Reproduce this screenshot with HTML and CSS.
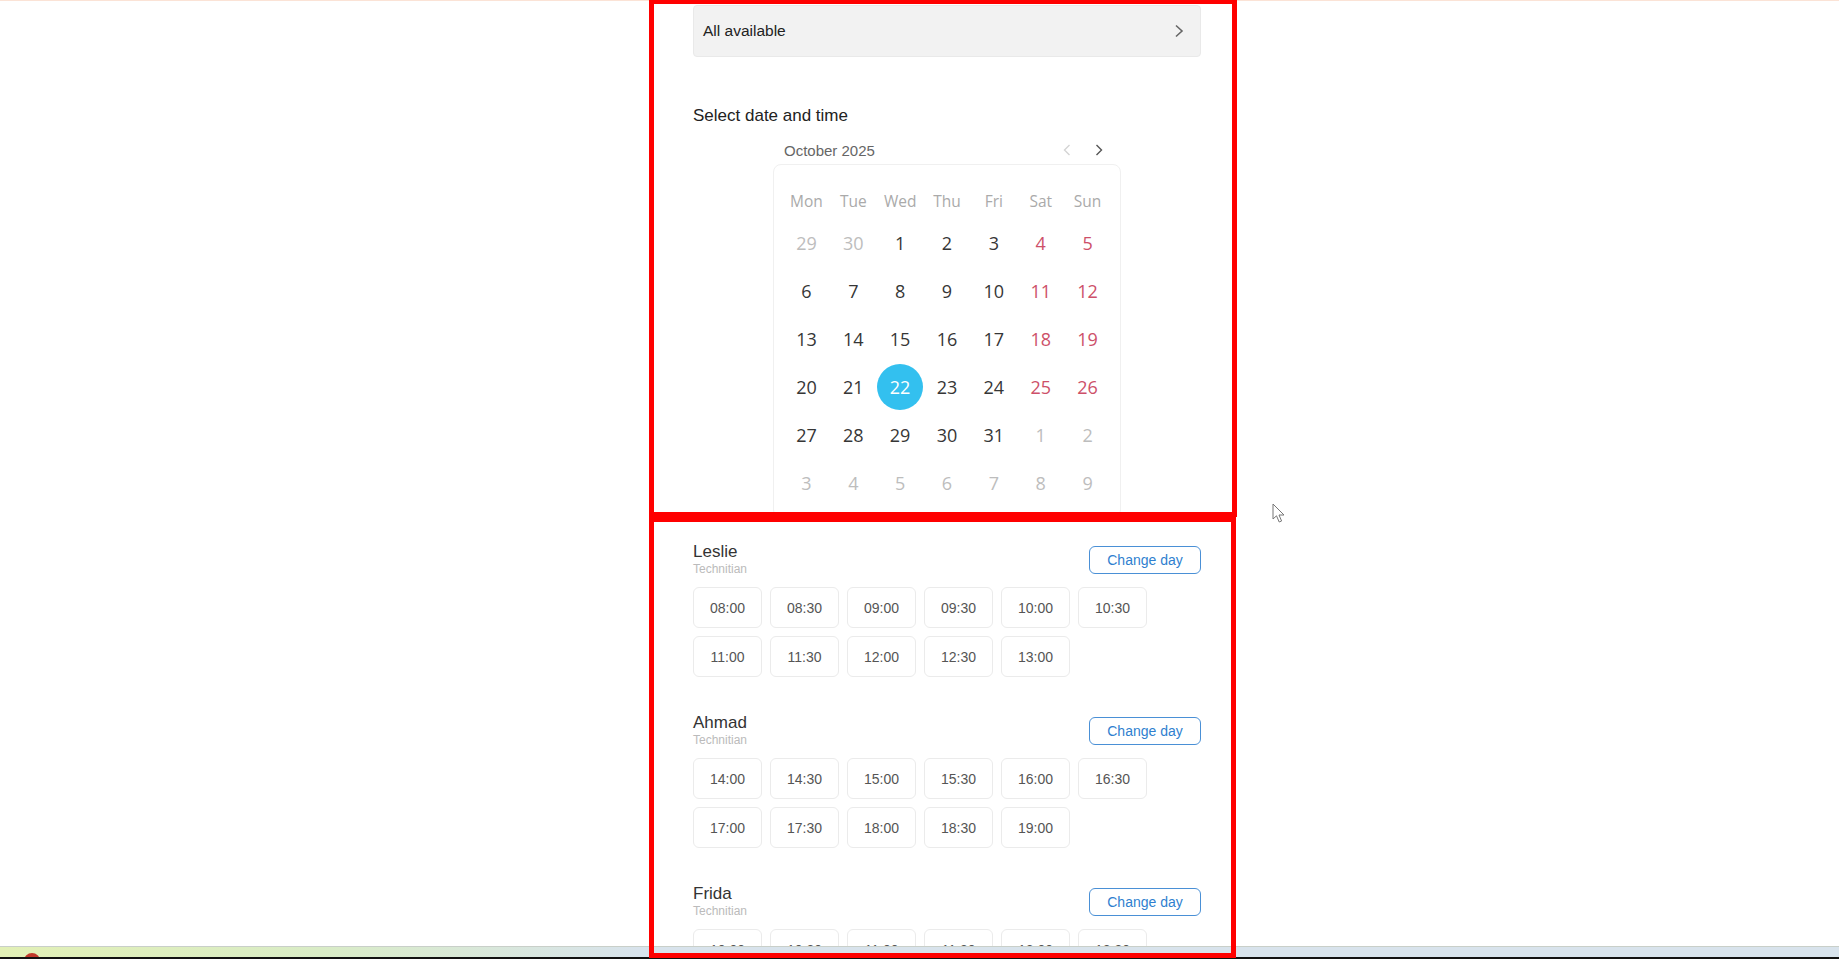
FILE: index.html
```html
<!DOCTYPE html>
<html>
<head>
<meta charset="utf-8">
<title>Booking</title>
<link rel="stylesheet" href="styles.css">
</head>
<body>
<div class="screen">
  <div class="page">
    <div class="column">
      <div class="select-box">
        <span>All available</span>
        <svg class="chev" width="10" height="14" viewBox="0 0 10 14"><path d="M2 1.5 L8 7 L2 12.5" fill="none" stroke="#666" stroke-width="1.6"/></svg>
      </div>

      <h2 class="title">Select date and time</h2>

      <div class="calendar">
        <div class="cal-head">
          <span class="month">October 2025</span>
          <div class="nav">
            <svg width="8" height="12" viewBox="0 0 8 12"><path d="M6.5 1 L1.5 6 L6.5 11" fill="none" stroke="#d4d4d4" stroke-width="1.4"/></svg>
            <svg width="8" height="12" viewBox="0 0 8 12"><path d="M1.5 1 L6.5 6 L1.5 11" fill="none" stroke="#555" stroke-width="1.4"/></svg>
          </div>
        </div>
        <div class="card">
          <div class="grid">
            <div class="dow">Mon</div><div class="dow">Tue</div><div class="dow">Wed</div><div class="dow">Thu</div><div class="dow">Fri</div><div class="dow">Sat</div><div class="dow">Sun</div>

            <div class="day out">29</div><div class="day out">30</div><div class="day">1</div><div class="day">2</div><div class="day">3</div><div class="day we">4</div><div class="day we">5</div>
            <div class="day">6</div><div class="day">7</div><div class="day">8</div><div class="day">9</div><div class="day">10</div><div class="day we">11</div><div class="day we">12</div>
            <div class="day">13</div><div class="day">14</div><div class="day">15</div><div class="day">16</div><div class="day">17</div><div class="day we">18</div><div class="day we">19</div>
            <div class="day">20</div><div class="day">21</div><div class="day sel"><span>22</span></div><div class="day">23</div><div class="day">24</div><div class="day we">25</div><div class="day we">26</div>
            <div class="day">27</div><div class="day">28</div><div class="day">29</div><div class="day">30</div><div class="day">31</div><div class="day out">1</div><div class="day out">2</div>
            <div class="day out">3</div><div class="day out">4</div><div class="day out">5</div><div class="day out">6</div><div class="day out">7</div><div class="day out">8</div><div class="day out">9</div>
          </div>
        </div>
      </div>

      <div class="staff">
        <div class="staff-head">
          <div class="who">
            <div class="name">Leslie</div>
            <div class="role">Technitian</div>
          </div>
          <button class="change">Change day</button>
        </div>
        <div class="slots">
          <div class="slot">08:00</div><div class="slot">08:30</div><div class="slot">09:00</div><div class="slot">09:30</div><div class="slot">10:00</div><div class="slot">10:30</div>
          <div class="slot">11:00</div><div class="slot">11:30</div><div class="slot">12:00</div><div class="slot">12:30</div><div class="slot">13:00</div>
        </div>
      </div>

      <div class="staff">
        <div class="staff-head">
          <div class="who">
            <div class="name">Ahmad</div>
            <div class="role">Technitian</div>
          </div>
          <button class="change">Change day</button>
        </div>
        <div class="slots">
          <div class="slot">14:00</div><div class="slot">14:30</div><div class="slot">15:00</div><div class="slot">15:30</div><div class="slot">16:00</div><div class="slot">16:30</div>
          <div class="slot">17:00</div><div class="slot">17:30</div><div class="slot">18:00</div><div class="slot">18:30</div><div class="slot">19:00</div>
        </div>
      </div>

      <div class="staff">
        <div class="staff-head">
          <div class="who">
            <div class="name">Frida</div>
            <div class="role">Technitian</div>
          </div>
          <button class="change">Change day</button>
        </div>
        <div class="slots">
          <div class="slot">10:00</div><div class="slot">10:30</div><div class="slot">11:00</div><div class="slot">11:30</div><div class="slot">12:00</div><div class="slot">12:30</div>
        </div>
      </div>
    </div>
  </div>

  <div class="taskbar"><span class="orb"></span></div>
  <div class="strip"></div>

  <div class="annot annot-top"></div>
  <div class="annot annot-bottom"></div>

  <svg class="cursor" width="14" height="21" viewBox="0 0 14 21"><path d="M1 1 L1 16 L4.5 12.8 L7.2 19 L9.6 18 L7 12 L12 12 Z" fill="#fff" stroke="#777" stroke-width="1" stroke-linejoin="round"/></svg>
</div>
</body>
</html>
```

FILE: styles.css
```css
* { box-sizing: border-box; }

html, body {
  margin: 0;
  padding: 0;
  background: #fff;
}

body {
  font-family: "Liberation Sans", Arial, sans-serif;
  color: #333;
}

.screen {
  position: relative;
  width: 1839px;
  height: 959px;
  overflow: hidden;
  background: #fff;
}

.page {
  height: 946px;
  overflow: hidden;
  border-top: 1px solid #fbe3d6;
}

.column {
  margin-left: 693px;
  width: 508px;
}

.select-box {
  margin-top: 4px;
  height: 52px;
  background: #f2f2f2;
  border: 1px solid #e9e9e9;
  border-radius: 4px;
  display: flex;
  align-items: center;
  justify-content: space-between;
  padding: 0 16px 0 9px;
  font-size: 15.5px;
  color: #222;
}

.chev { display: block; }

.title {
  margin: 49px 0 0 0;
  font-size: 17px;
  line-height: 20px;
  font-weight: normal;
  color: #222;
}

.calendar {
  width: 348px;
  margin: 14px auto 0 auto;
}

.cal-head {
  height: 20px;
  display: flex;
  align-items: center;
  justify-content: space-between;
  padding: 0 18px 0 11px;
}

.month {
  font-size: 15px;
  color: #666;
}

.nav {
  display: flex;
  gap: 24px;
  align-items: center;
}

.nav svg { display: block; }

.card {
  margin-top: 4px;
  border: 1px solid #f0f0f0;
  border-radius: 8px;
  padding: 18px 9px 10px 9px;
}

.grid {
  display: grid;
  grid-template-columns: repeat(7, 1fr);
  font-family: "Open Sans", "Noto Sans", sans-serif;
}

.dow {
  height: 36px;
  display: flex;
  align-items: center;
  justify-content: center;
  font-size: 15.5px;
  color: #aaa;
}

.day {
  height: 48px;
  display: flex;
  align-items: center;
  justify-content: center;
  font-size: 18px;
  color: #363636;
}

.day.out { color: #bdbdbd; }
.day.we { color: #cd5069; }

.day.sel span {
  width: 46px;
  height: 46px;
  border-radius: 50%;
  background: #33c0ef;
  color: #fff;
  display: flex;
  align-items: center;
  justify-content: center;
}

.staff {
  margin-top: 24px;
}

.staff + .staff {
  margin-top: 36px;
}

.staff-head {
  display: flex;
  justify-content: space-between;
  align-items: center;
}

.name {
  font-size: 17px;
  line-height: 20px;
  color: #333;
}

.role {
  font-size: 12px;
  line-height: 15px;
  color: #bbb;
}

.change {
  width: 112px;
  height: 28px;
  padding: 0;
  background: #fff;
  border: 1px solid #4a90d6;
  border-radius: 6px;
  color: #2f7fcf;
  font-family: "Liberation Sans", Arial, sans-serif;
  font-size: 14px;
}

.slots {
  margin-top: 10px;
  display: flex;
  flex-wrap: wrap;
  gap: 8px 8px;
}

.slot {
  width: 69px;
  height: 41px;
  border: 1px solid #ebebeb;
  border-radius: 6px;
  display: flex;
  align-items: center;
  justify-content: center;
  font-size: 14px;
  color: #555;
}

.taskbar {
  position: relative;
  height: 11px;
  border-top: 1px solid #c9cfc9;
  background: linear-gradient(90deg, #e2f0b6 0px, #d9ecc6 320px, #d8e3ec 640px, #d8e3ec 1839px);
  overflow: hidden;
}

.orb {
  position: absolute;
  left: 24px;
  top: 6px;
  width: 16px;
  height: 16px;
  border-radius: 50%;
  background: #c0392b;
}

.strip {
  height: 2px;
  background: #111;
}

.annot {
  position: absolute;
  border: 5px solid #ff0000;
  pointer-events: none;
}

.annot-top {
  left: 649px;
  top: -1px;
  width: 588px;
  height: 518px;
}

.annot-bottom {
  left: 649px;
  top: 517px;
  width: 587px;
  height: 441px;
}

.cursor {
  position: absolute;
  left: 1272px;
  top: 503px;
}
```
